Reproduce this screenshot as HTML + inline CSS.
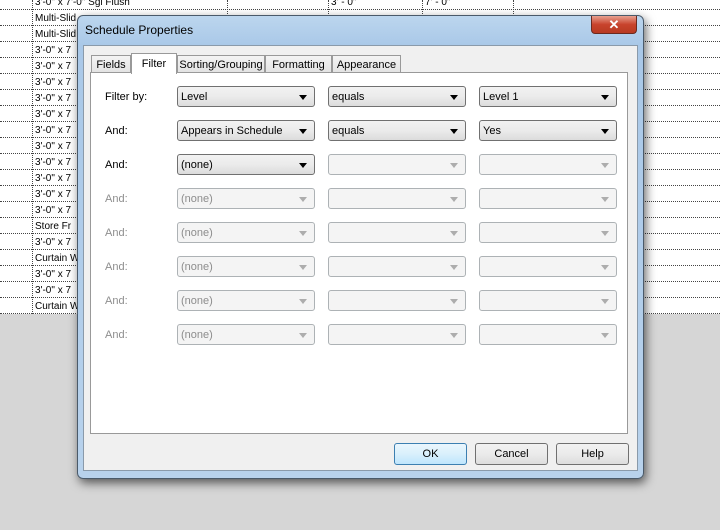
<!DOCTYPE html><html><head><style>
*{margin:0;padding:0;box-sizing:border-box}
body{width:720px;height:530px;background:#d6d6d6;position:relative;overflow:hidden;font-family:"Liberation Sans",sans-serif;font-size:11px}
.sheet{position:absolute;left:0;top:0;width:720px;height:314px;background:#fff}
.h{position:absolute;left:0;width:720px;border-top:1px dotted #444}
.v{position:absolute;top:0;height:314px;border-left:1px dotted #444}
.t{position:absolute;left:35px;font-size:10px;color:#000}
.dlg{position:absolute;left:77px;top:15px;width:567px;height:464px;border:1px solid #4a5a6a;border-radius:6px;background:linear-gradient(#bcd6ee,#a9c8e8 30px,#b8d2ec);box-shadow:2px 4px 10px rgba(0,0,0,.6)}
.title{position:absolute;left:7px;top:7px;font-size:12px;color:#000}
.x{position:absolute;right:6px;top:0;width:46px;height:18px;border:1px solid #6b2a20;border-top:none;border-radius:0 0 4px 4px;background:linear-gradient(#e8a090,#c8432c 50%,#b83a22);color:#fff;text-align:center;font-weight:bold;font-size:13px;line-height:17px}
.inner{position:absolute;left:5px;top:29px;width:555px;height:426px;background:#f0f0f0;border:1px solid #8a9aaa}
.tab{position:absolute;top:9px;height:18px;border:1px solid #999;border-bottom:none;background:linear-gradient(#f4f4f4,#e2e2e2);padding-top:3px;text-align:center;font-size:11px}
.tab.a{top:7px;height:21px;background:#fff;z-index:2}
.body{position:absolute;left:6px;top:26px;width:538px;height:362px;background:#fff;border:1px solid #999}
.lab{position:absolute;left:14px;font-size:11px}
.cb{position:absolute;width:138px;height:21px;border:1px solid #707070;border-radius:3px;background:linear-gradient(#f2f2f2,#ebebeb 50%,#dcdcdc);padding:1px 0 0 3px;line-height:19px;font-size:11px}
.cb:after{content:"";position:absolute;right:7px;top:8px;border:4px solid transparent;border-top:5px solid #000;border-bottom:none}
.cb.d{border-color:#adb2b5;background:#f4f4f4;color:#8d8d8d}
.cb.d:after{border-top-color:#adadad}
.btn{position:absolute;top:397px;width:73px;height:22px;border:1px solid #707070;border-radius:3px;background:linear-gradient(#f2f2f2,#ebebeb 50%,#dddddd);text-align:center;line-height:20px;font-size:11px}
</style></head><body>
<div class="sheet">
<div class="h" style="top:9px"></div><div class="h" style="top:25px"></div><div class="h" style="top:41px"></div><div class="h" style="top:57px"></div><div class="h" style="top:73px"></div><div class="h" style="top:89px"></div><div class="h" style="top:105px"></div><div class="h" style="top:121px"></div><div class="h" style="top:137px"></div><div class="h" style="top:153px"></div><div class="h" style="top:169px"></div><div class="h" style="top:185px"></div><div class="h" style="top:201px"></div><div class="h" style="top:217px"></div><div class="h" style="top:233px"></div><div class="h" style="top:249px"></div><div class="h" style="top:265px"></div><div class="h" style="top:281px"></div><div class="h" style="top:297px"></div><div class="h" style="top:313px"></div>
<div class="v" style="left:32px"></div><div class="v" style="left:227px"></div><div class="v" style="left:328px"></div><div class="v" style="left:422px"></div><div class="v" style="left:513px"></div>
<div class="t" style="top:-3px">3'-0" x 7'-0" Sgl Flush</div><div class="t" style="left:331px;top:-3px">3' - 0"</div><div class="t" style="left:425px;top:-3px">7' - 0"</div>
<div class="t" style="top:13px">Multi-Slid</div><div class="t" style="top:29px">Multi-Slid</div>
<div class="t" style="top:45px">3'-0" x 7</div><div class="t" style="top:61px">3'-0" x 7</div><div class="t" style="top:77px">3'-0" x 7</div><div class="t" style="top:93px">3'-0" x 7</div><div class="t" style="top:109px">3'-0" x 7</div><div class="t" style="top:125px">3'-0" x 7</div><div class="t" style="top:141px">3'-0" x 7</div><div class="t" style="top:157px">3'-0" x 7</div><div class="t" style="top:173px">3'-0" x 7</div><div class="t" style="top:189px">3'-0" x 7</div><div class="t" style="top:205px">3'-0" x 7</div><div class="t" style="top:221px">Store Fr</div><div class="t" style="top:237px">3'-0" x 7</div><div class="t" style="top:253px">Curtain W</div><div class="t" style="top:269px">3'-0" x 7</div><div class="t" style="top:285px">3'-0" x 7</div><div class="t" style="top:301px">Curtain W</div>
</div>
<div class="dlg">
<div class="title">Schedule Properties</div>
<div class="x">✕</div>
<div class="inner">
<div class="tab" style="left:7px;width:40px">Fields</div>
<div class="tab a" style="left:47px;width:46px;padding-top:4px">Filter</div>
<div class="tab" style="left:93px;width:88px">Sorting/Grouping</div>
<div class="tab" style="left:181px;width:67px">Formatting</div>
<div class="tab" style="left:248px;width:69px">Appearance</div>
<div class="body">
<div class="lab" style="top:18px">Filter by:</div>
<div class="cb" style="left:86px;top:13px">Level</div><div class="cb" style="left:237px;top:13px">equals</div><div class="cb" style="left:388px;top:13px">Level 1</div>
<div class="lab" style="top:52px">And:</div>
<div class="cb" style="left:86px;top:47px">Appears in Schedule</div><div class="cb" style="left:237px;top:47px">equals</div><div class="cb" style="left:388px;top:47px">Yes</div>
<div class="lab" style="top:86px">And:</div>
<div class="cb" style="left:86px;top:81px">(none)</div><div class="cb d" style="left:237px;top:81px"></div><div class="cb d" style="left:388px;top:81px"></div>
<div class="lab" style="top:120px;color:#8d8d8d">And:</div><div class="cb d" style="left:86px;top:115px">(none)</div><div class="cb d" style="left:237px;top:115px"></div><div class="cb d" style="left:388px;top:115px"></div>
<div class="lab" style="top:154px;color:#8d8d8d">And:</div><div class="cb d" style="left:86px;top:149px">(none)</div><div class="cb d" style="left:237px;top:149px"></div><div class="cb d" style="left:388px;top:149px"></div>
<div class="lab" style="top:188px;color:#8d8d8d">And:</div><div class="cb d" style="left:86px;top:183px">(none)</div><div class="cb d" style="left:237px;top:183px"></div><div class="cb d" style="left:388px;top:183px"></div>
<div class="lab" style="top:222px;color:#8d8d8d">And:</div><div class="cb d" style="left:86px;top:217px">(none)</div><div class="cb d" style="left:237px;top:217px"></div><div class="cb d" style="left:388px;top:217px"></div>
<div class="lab" style="top:256px;color:#8d8d8d">And:</div><div class="cb d" style="left:86px;top:251px">(none)</div><div class="cb d" style="left:237px;top:251px"></div><div class="cb d" style="left:388px;top:251px"></div>
</div>
<div class="btn" style="left:310px;border-color:#3c7fb1;background:linear-gradient(#eaf6fd,#d9f0fc 50%,#bee6fd)">OK</div>
<div class="btn" style="left:391px">Cancel</div>
<div class="btn" style="left:472px">Help</div>
</div>
</div>
</body></html>
